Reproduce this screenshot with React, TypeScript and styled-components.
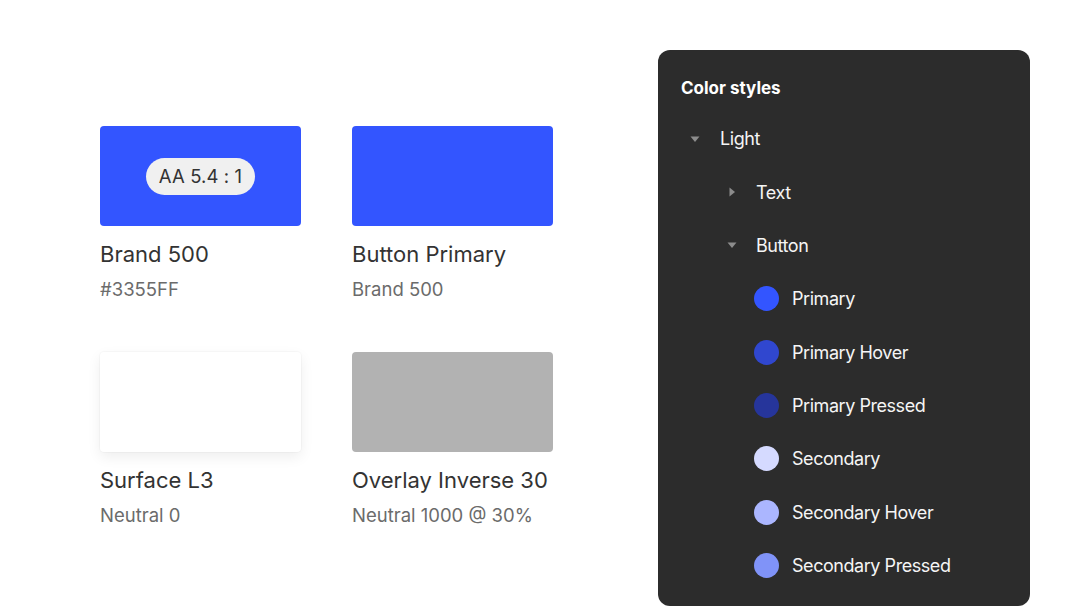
import React from "react";
import styled, { createGlobalStyle } from "styled-components";

const Global = createGlobalStyle`
  html, body { margin: 0; padding: 0; background: #ffffff; }
  body { font-family: Inter, "Noto Sans", sans-serif; -webkit-font-smoothing: antialiased; }
`;

const Page = styled.div`
  width: 1080px;
  height: 606px;
  overflow: hidden;
  display: flex;
  align-items: flex-start;
  padding-left: 100px;
  box-sizing: border-box;
`;

const Grid = styled.div`
  margin-top: 126px;
  display: grid;
  grid-template-columns: 201px 201px;
  column-gap: 51px;
  row-gap: 51px;
`;

const Card = styled.div`
  display: flex;
  flex-direction: column;
`;

const Swatch = styled.div<{ $bg: string; $raised?: boolean }>`
  height: 100px;
  border-radius: 4px;
  background: ${(p) => p.$bg};
  display: flex;
  align-items: center;
  justify-content: center;
  box-shadow: ${(p) =>
    p.$raised ? "0 5px 14px rgba(0,0,0,0.07), 0 0 0 1px rgba(0,0,0,0.025)" : "none"};
`;

const Badge = styled.span`
  background: #f0f0f0;
  color: #333;
  font-size: 18.5px;
  line-height: 37px;
  height: 37px;
  padding: 0 13px;
  border-radius: 19px;
  letter-spacing: 0.1px;
`;

const Title = styled.div`
  margin-top: 14px;
  font-size: 22px;
  line-height: 28px;
  color: #333333;
`;

const Sub = styled.div`
  margin-top: 9px;
  font-size: 18.5px;
  line-height: 24px;
  color: #6b6b6b;
`;

const Panel = styled.div`
  margin-left: 105px;
  margin-top: 50px;
  width: 372px;
  height: 556px;
  background: #2c2c2c;
  border-radius: 12px;
  padding-top: 26px;
  box-sizing: border-box;
  display: flex;
  flex-direction: column;
`;

const Header = styled.div`
  padding-left: 23px;
  font-size: 17px;
  line-height: 24px;
  font-weight: 700;
  color: #ffffff;
  margin-bottom: 12px;
`;

const Row = styled.div<{ $indent: number; $gap: number }>`
  height: 53.375px;
  display: flex;
  align-items: center;
  padding-left: ${(p) => p.$indent}px;
  gap: ${(p) => p.$gap}px;
  font-size: 18px;
  letter-spacing: -0.45px;
  color: #f5f5f5;
`;

const Dot = styled.span<{ $c: string }>`
  width: 25px;
  height: 25px;
  border-radius: 50%;
  background: ${(p) => p.$c};
  flex: none;
`;

const Caret = ({ open }: { open: boolean }) => (
  <svg width="10" height="10" viewBox="0 0 10 10" style={{ flex: "none" }}>
    {open ? (
      <path d="M0.5 2.5 L9.5 2.5 L5 8 Z" fill="#8c8c8c" />
    ) : (
      <path d="M2.5 0.5 L8 5 L2.5 9.5 Z" fill="#8c8c8c" />
    )}
  </svg>
);

const cards = [
  { bg: "#3355FF", title: "Brand 500", sub: "#3355FF", badge: "AA 5.4 : 1" },
  { bg: "#3355FF", title: "Button Primary", sub: "Brand 500" },
  { bg: "#ffffff", title: "Surface L3", sub: "Neutral 0", raised: true },
  { bg: "#b2b2b2", title: "Overlay Inverse 30", sub: "Neutral 1000 @ 30%" },
];

const colors = [
  { name: "Primary", c: "#3355FF" },
  { name: "Primary Hover", c: "#3047CF" },
  { name: "Primary Pressed", c: "#26359B" },
  { name: "Secondary", c: "#D5DAFF" },
  { name: "Secondary Hover", c: "#ABB6FF" },
  { name: "Secondary Pressed", c: "#8093F8" },
];

export default function App() {
  return (
    <>
      <Global />
      <Page>
        <Grid>
          {cards.map((c) => (
            <Card key={c.title}>
              <Swatch $bg={c.bg} $raised={c.raised}>
                {c.badge && <Badge>{c.badge}</Badge>}
              </Swatch>
              <Title>{c.title}</Title>
              <Sub>{c.sub}</Sub>
            </Card>
          ))}
        </Grid>
        <Panel>
          <Header>Color styles</Header>
          <Row $indent={32} $gap={20}>
            <Caret open />
            Light
          </Row>
          <Row $indent={69} $gap={19}>
            <Caret open={false} />
            Text
          </Row>
          <Row $indent={69} $gap={19}>
            <Caret open />
            Button
          </Row>
          {colors.map((c) => (
            <Row key={c.name} $indent={96} $gap={13}>
              <Dot $c={c.c} />
              {c.name}
            </Row>
          ))}
        </Panel>
      </Page>
    </>
  );
}
